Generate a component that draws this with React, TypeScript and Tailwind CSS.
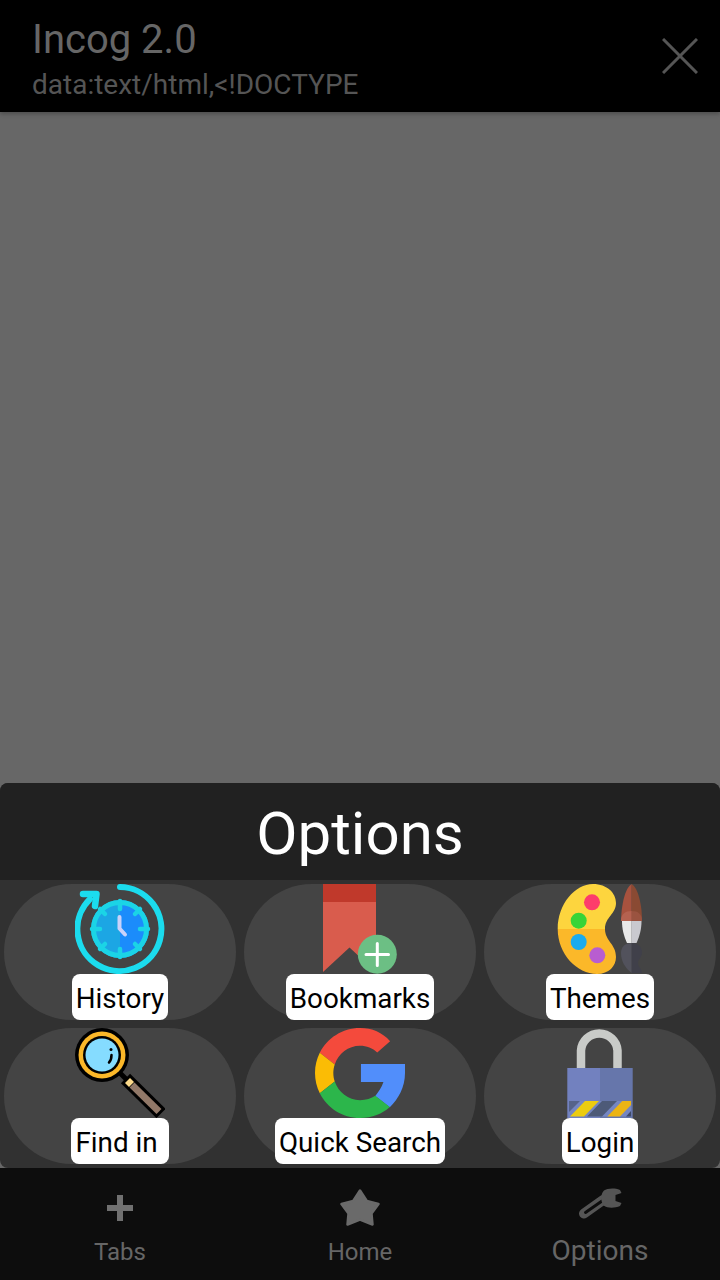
import React from "react";

const HistoryIcon = () => (
  <svg viewBox="0 0 90 90" className="w-[90px] h-[90px]">
    <path d="M45 3A42 42 0 1 1 15 15" fill="none" stroke="#1bdcee" strokeWidth="6" strokeLinecap="round" />
    <path d="M8 10H21.500L20 22" fill="none" stroke="#1bdcee" strokeWidth="6.500" strokeLinecap="round" strokeLinejoin="round" />
    <path d="M45 16A29 29 0 0 0 45 74Z" fill="#1ca6e4" />
    <path d="M45 16A29 29 0 0 1 45 74Z" fill="#1b8cfb" />
    <circle cx="45" cy="45" r="26.500" fill="none" stroke="#1bd4e6" strokeWidth="5" />
    <path d="M45 17V25M45 65V73M17 45H25M65 45H73M25 25L30 30M65 25L60 30M25 65L30 60M65 65L60 60" stroke="#1bd4e6" strokeWidth="4.500" strokeLinecap="round" />
    <path d="M44.500 33V44.500L50 50.500" fill="none" stroke="#c9d2fa" strokeWidth="4" strokeLinecap="round" strokeLinejoin="round" />
  </svg>
);

const BookmarkIcon = () => (
  <svg viewBox="0 0 90 90" className="w-[90px] h-[90px]">
    <path d="M8 0H61V88L34.500 63.500L8 88Z" fill="#d95c4d" />
    <rect x="8" y="0" width="53" height="18" fill="#c0392b" />
    <circle cx="62.300" cy="70.300" r="19.500" fill="#6cbf84" />
    <path d="M51 70.500H73.500M62.300 59.500V81.500" stroke="#fff" strokeWidth="3" strokeLinecap="round" />
  </svg>
);

const ThemesIcon = () => (
  <svg viewBox="0 0 90 90" className="w-[90px] h-[90px]">
    <path d="M2.700 45C2.700 20 20 0 38 0C52 0 61 9 61 19C61 30 50 33 50 45H2.700Z" fill="#fdd53e" />
    <path d="M2.700 45C2.700 70 22 90 42 90C54 90 61 82 61 73C61 60 50 57 50 45H2.700Z" fill="#fbb829" />
    <circle cx="37" cy="18.300" r="8" fill="#fd3c6b" />
    <circle cx="23.700" cy="36.700" r="8" fill="#37d437" />
    <circle cx="23.700" cy="58" r="8" fill="#1babee" />
    <circle cx="42.300" cy="71.300" r="8" fill="#b85dd0" />
    <path d="M76.700 0C70 4 66.500 20 66 37H76.700Z" fill="#a8523e" />
    <path d="M76.700 0C83 4 87 20 87 37H76.700Z" fill="#8a4a33" />
    <path d="M66 37C66 30 70 27 76.700 27V37Z" fill="#b56250" />
    <path d="M87 37C87 30 83 27 76.700 27V37Z" fill="#9a5340" />
    <path d="M67 37H76.700V59H72C69 52 67 46 67 37Z" fill="#e8e8e8" />
    <path d="M86.500 37H76.700V59H81.500C84.500 52 86.500 46 86.500 37Z" fill="#c9c9cf" />
    <path d="M76.700 59C70 59 66 63 66 69C66 77 70 84 76.700 89Z" fill="#52525c" />
    <path d="M76.700 59C83 59 87 63 87 68C87 74 83 75 83 79C83 83 87 85 87 89H76.700Z" fill="#40404a" />
  </svg>
);

const FindIcon = () => (
  <svg viewBox="0 0 90 90" className="w-[90px] h-[90px]">
    <path d="M44 44L52 52" stroke="#000" strokeWidth="5" />
    <path d="M50.500 50.500L86 85.500" stroke="#000" strokeWidth="13" />
    <path d="M57 57L84 83.500" stroke="#917868" strokeWidth="7" />
    <path d="M52.500 52.500L56.500 56.500" stroke="#fbd98a" strokeWidth="7" />
    <circle cx="27" cy="27" r="27" fill="#000" />
    <circle cx="27" cy="27" r="23.500" fill="#fbb829" />
    <circle cx="27" cy="27" r="19" fill="#000" />
    <circle cx="27" cy="27" r="16.500" fill="#85dcff" />
    <path d="M36.500 27C36.500 31 35.500 33 34 34.500" fill="none" stroke="#000" strokeWidth="2.500" strokeLinecap="round" />
    <circle cx="36" cy="21.500" r="1.500" fill="#000" />
  </svg>
);

const GoogleIcon = () => (
  <svg viewBox="0 0 48 48" className="w-[90px] h-[90px]">
    <path d="M24 9.500c3.540 0 6.710 1.220 9.210 3.600l6.850-6.100C35.900 2.380 30.470 0 24 0 14.620 0 6.510 5.380 2.560 13.220l7.980 6.190C12.430 13.720 17.740 9.500 24 9.500z" fill="#f44a3c" />
    <path d="M48 19.200H24.500V28.800H36.500c-1 2.900-2.600 5.300-4.340 7.400l7.730 6C44.400 38 48 31.500 48 24c0-1.600 0-3.200 0-4.800z" fill="#518efb" />
    <path d="M10.530 28.590c-.48-1.450-.76-2.990-.76-4.590s.27-3.140.76-4.590l-7.980-6.190C.92 16.460 0 20.120 0 24c0 3.880.92 7.540 2.560 10.780l7.970-6.190z" fill="#fbbc05" />
    <path d="M24 48c6.480 0 11.930-2.130 15.890-5.810l-7.730-6c-2.150 1.450-4.920 2.300-8.160 2.300-6.260 0-11.570-4.220-13.470-9.910l-7.980 6.190C6.510 42.620 14.620 48 24 48z" fill="#2cb64b" />
  </svg>
);

const LoginIcon = () => (
  <svg viewBox="0 0 90 90" className="w-[90px] h-[90px]">
    <path d="M26 41V22.500A18.300 18.300 0 0 1 62.500 22.500V41" fill="none" stroke="#c9cbc8" strokeWidth="8.500" />
    <rect x="12.300" y="40" width="32.700" height="50" fill="#7281bf" />
    <rect x="45" y="40" width="32.700" height="50" fill="#6676ab" />
    <rect x="14" y="73" width="62" height="15.500" fill="#7586c2" />
    <path d="M14 73H25L14 84Z" fill="#56638a" />
    <path d="M32 88.500L47 73H62L47 88.500Z" fill="#4d5a78" />
    <path d="M71 88.500L76 83V88.500Z" fill="#3f4a68" />
    <path d="M15 88.500L30 73H44L29 88.500Z" fill="#eccc10" />
    <path d="M52.300 88.500L67.300 73H76V77L65 88.500Z" fill="#ecb414" />
  </svg>
);

const items = [
  { label: "History", Icon: HistoryIcon },
  { label: "Bookmarks", Icon: BookmarkIcon },
  { label: "Themes", Icon: ThemesIcon },
  { label: "Find in\u00a0", Icon: FindIcon },
  { label: "Quick Search", Icon: GoogleIcon },
  { label: "Login", Icon: LoginIcon },
];

const PlusIcon = () => (
  <svg viewBox="0 0 26 26" className="w-[26px] h-[26px]">
    <path d="M13 0V26M0 13H26" stroke="#707070" strokeWidth="6" />
  </svg>
);

const StarIcon = () => (
  <svg viewBox="0 0 40 37" className="w-[40px] h-[37px]">
    <path d="M20 1.500L26.800 12L38.500 15L31.500 24.500L32.500 35.500L20 30.500L7.500 35.500L8.500 24.500L1.500 15L13.200 12Z" fill="#6a6a6a" stroke="#6a6a6a" strokeWidth="2.500" strokeLinejoin="round" />
  </svg>
);

const WrenchIcon = () => (
  <svg viewBox="0 0 44 32" className="w-[44px] h-[32px]">
    <path d="M6 25.500L25 12" stroke="#555" strokeWidth="10" strokeLinecap="round" />
    <path d="M7.500 24.500L24 13" stroke="#0d0d0d" strokeWidth="3" strokeLinecap="round" />
    <path d="M26 2.500C29 0.500 36 -0.500 42 2L43.500 5L37.500 7V13L43.500 15L42 18C37 20 30 20.500 25.500 17.500C22.500 13 22.500 6 26 2.500Z" fill="#555" />
  </svg>
);

export default function App() {
  return (
    <div className="w-[720px] h-[1280px] flex flex-col bg-[#676767] overflow-hidden font-['Roboto',sans-serif]">
      <header className="h-[112px] shrink-0 bg-black flex items-center justify-between pl-[32px] pr-[22px] shadow-[0_2px_4px_rgba(0,0,0,0.25)]">
        <div className="flex flex-col self-start pt-[16px]">
          <div className="text-[40px] leading-[48px] text-[#666]">Incog 2.0</div>
          <div className="text-[28px] leading-[42px] text-[#555]">data:text/html,&lt;!DOCTYPE</div>
        </div>
        <svg viewBox="0 0 36 36" className="w-[36px] h-[36px]">
          <path d="M1 1L35 35M35 1L1 35" stroke="#555" strokeWidth="3" />
        </svg>
      </header>
      <main className="flex-1 flex flex-col justify-end">
        <section className="rounded-lg overflow-hidden bg-[#313131]">
          <div className="h-[97px] pt-[4px] bg-[#212121] flex items-center justify-center text-white text-[60px] leading-none">Options</div>
          <div className="grid grid-cols-3 gap-2 p-1">
            {items.map(({ label, Icon }) => (
              <div key={label} className="h-[136px] rounded-full bg-[#444444] flex flex-col items-center">
                <Icon />
                <div className="h-[46px] px-1 pt-[4px] flex items-center rounded-lg bg-white text-black text-[27.8px] whitespace-pre">{label}</div>
              </div>
            ))}
          </div>
        </section>
      </main>
      <nav className="h-[112px] shrink-0 bg-[#0d0d0d] grid grid-cols-3">
        <div className="flex flex-col items-center pt-[27px]">
          <PlusIcon />
          <span className="text-[24px] leading-[28px] mt-[17px] text-[#666]">Tabs</span>
        </div>
        <div className="flex flex-col items-center pt-[21px]">
          <StarIcon />
          <span className="text-[24px] leading-[28px] mt-[12px] text-[#666]">Home</span>
        </div>
        <div className="flex flex-col items-center pt-[20px]">
          <WrenchIcon />
          <span className="text-[28px] leading-[32px] mt-[15px] text-[#666]">Options</span>
        </div>
      </nav>
    </div>
  );
}
